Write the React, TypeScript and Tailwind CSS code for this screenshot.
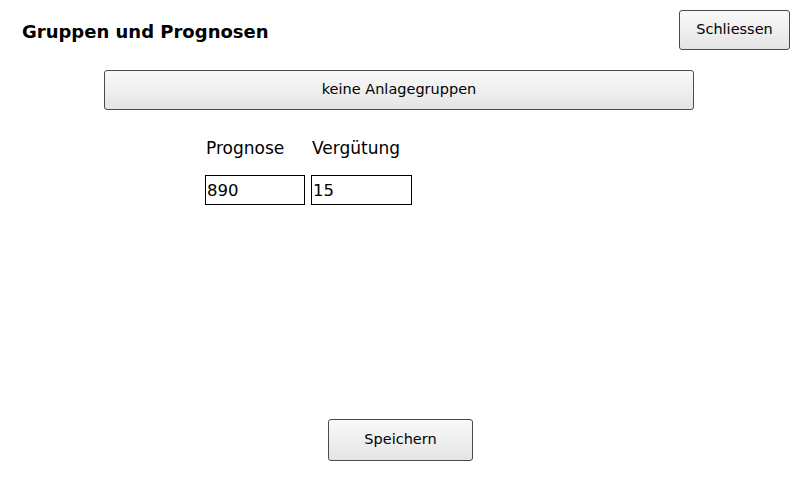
import { useState } from "react";

const font = { fontFamily: '"DejaVu Sans", Verdana, sans-serif' };

function WinButton({
  label,
  className,
  onClick,
}: {
  label: string;
  className: string;
  onClick?: () => void;
}) {
  return (
    <button
      onClick={onClick}
      className={
        "flex items-center justify-center rounded-[3px] border border-[#4a4a4a] bg-gradient-to-b from-[#f9f9f9] via-[#efefef] to-[#e4e4e4] text-[14.5px] text-black " +
        className
      }
    >
      {label}
    </button>
  );
}

export default function App() {
  const [prognose, setPrognose] = useState("890");
  const [verguetung, setVerguetung] = useState("15");

  return (
    <div
      className="flex h-[480px] w-[800px] flex-col overflow-hidden bg-white text-black"
      style={font}
    >
      <div className="flex items-start justify-between pl-[22px] pr-[10px] pt-[10px]">
        <h1 className="mt-[9px] text-[18px] font-bold leading-[26px]">
          Gruppen und Prognosen
        </h1>
        <WinButton label="Schliessen" className="h-[40px] w-[111px]" />
      </div>

      <WinButton
        label="keine Anlagegruppen"
        className="ml-[104px] mt-[20px] h-[40px] w-[590px]"
      />

      <div className="ml-[205px] mt-[27px] flex gap-[6px]">
        <div className="flex w-[100px] flex-col">
          <span className="pl-[1px] text-[17px] leading-[22px]">Prognose</span>
          <input
            value={prognose}
            onChange={(e) => setPrognose(e.target.value)}
            className="mt-[16px] h-[30px] w-[100px] border border-black px-[1px] text-[16.5px] outline-none"
          />
        </div>
        <div className="flex w-[101px] flex-col">
          <span className="pl-[1px] text-[17px] leading-[22px]">Vergütung</span>
          <input
            value={verguetung}
            onChange={(e) => setVerguetung(e.target.value)}
            className="mt-[16px] h-[30px] w-[101px] border border-black px-[1px] text-[16.5px] outline-none"
          />
        </div>
      </div>

      <WinButton
        label="Speichern"
        className="mb-[19px] ml-[328px] mt-auto h-[42px] w-[145px]"
      />
    </div>
  );
}
